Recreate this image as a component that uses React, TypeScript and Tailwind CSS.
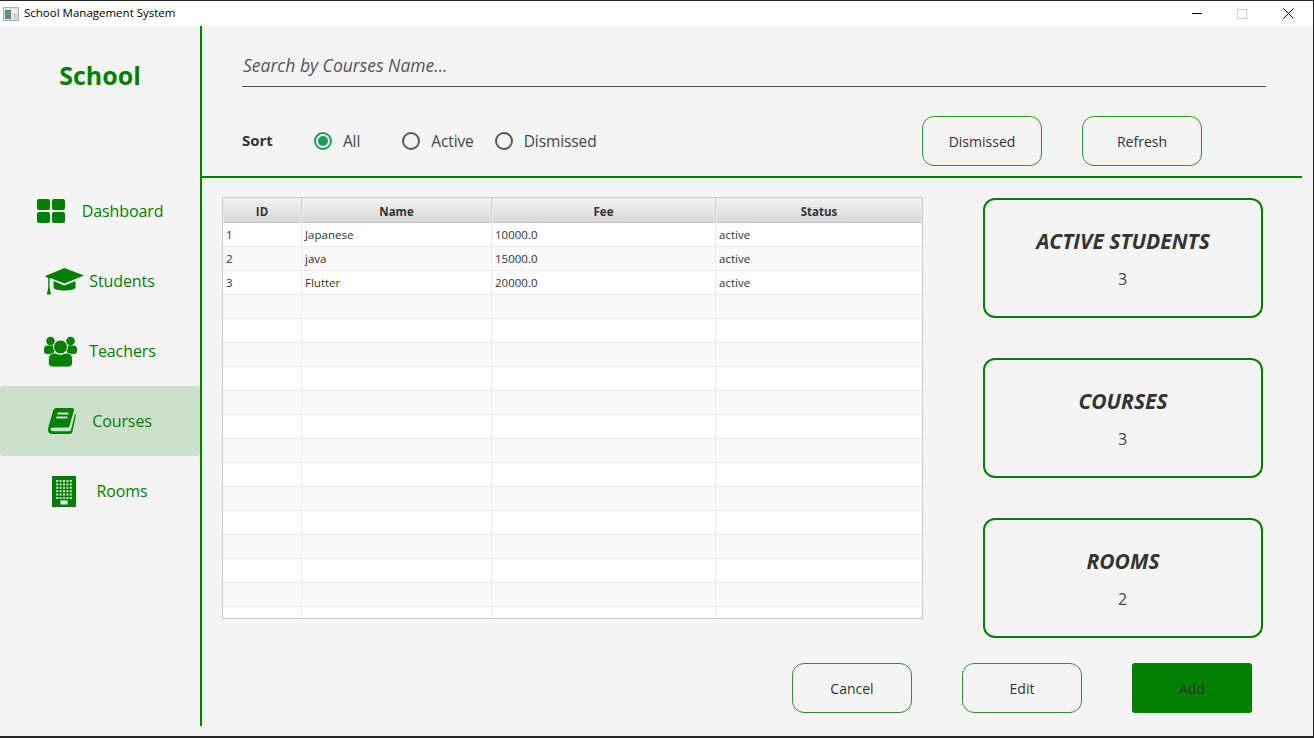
const GREEN = "#008000";

function DashboardIcon() {
  return (
    <svg width="28" height="24" viewBox="0 0 28 24" fill={GREEN}>
      <rect x="0" y="0" width="13" height="11" rx="2" />
      <rect x="15" y="0" width="13" height="11" rx="2" />
      <rect x="0" y="13" width="13" height="11" rx="2" />
      <rect x="15" y="13" width="13" height="11" rx="2" />
    </svg>
  );
}

function CapIcon() {
  return (
    <svg width="39" height="27" viewBox="0 0 39 27" fill={GREEN}>
      <path d="M19.5 0 L39 7.5 L19.5 15.5 L6 10.2 L4.6 10.8 V20 L6 26.5 H1.8 L3.2 20 V10.2 L0 8 Z" />
      <path d="M8.5 13 L19.5 17.6 L30.5 13 V19.5 C30.5 23.5 8.5 23.5 8.5 19.5 Z" />
    </svg>
  );
}

function TeachersIcon() {
  return (
    <svg width="33" height="31" viewBox="0 0 33 31" fill={GREEN}>
      <circle cx="6.5" cy="5" r="4.3" />
      <circle cx="26.5" cy="5" r="4.3" />
      <path d="M0 13 Q0 9.5 3.5 9.5 H10 V18 H3 Q0 18 0 15 Z" />
      <path d="M33 13 Q33 9.5 29.5 9.5 H23 V18 H30 Q33 18 33 15 Z" />
      <circle cx="16.5" cy="11" r="7" stroke="#f4f4f4" strokeWidth="1" />
      <path d="M4.5 27 V23 Q4.5 17 11 17 Q16.5 20 22 17 Q28.5 17 28.5 23 V27 Q28.5 31 24 31 H9 Q4.5 31 4.5 27 Z" stroke="#f4f4f4" strokeWidth="0.8" />
    </svg>
  );
}

function BookIcon() {
  return (
    <svg width="28" height="26" viewBox="0 0 28 26" fill={GREEN}>
      <path d="M8 0 H24 Q26.5 0 25.8 2.5 L21.5 18 Q21 19.5 19.5 19.5 H6 Q2.5 19.5 2.5 21.5 Q2.5 23.2 5.5 23.2 H21 Q22.5 23.2 23 22 L27 6 L28 7 L24.5 23.5 Q24 26 21 26 H5 Q0 26 0 22 Q0 20 1 17 L5 3 Q6 0 8 0 Z" />
      <rect x="9.5" y="4.5" width="11" height="2" fill="#cfe2cf" />
      <rect x="8.4" y="8.5" width="11" height="2" fill="#cfe2cf" />
    </svg>
  );
}

function RoomsIcon() {
  const rows = [0, 1, 2, 3, 4, 5];
  const cols = [0, 1, 2, 3, 4];
  return (
    <svg width="24" height="31" viewBox="0 0 24 31">
      <rect width="24" height="31" fill={GREEN} />
      {rows.map((r) =>
        cols.map((c) => (
          <rect key={`${r}-${c}`} x={4.2 + c * 3.4} y={4 + r * 3.4} width="2" height="2" fill="#cfe6cf" />
        ))
      )}
      <rect x="8.5" y="24.5" width="7" height="4" fill="#f4f4f4" />
    </svg>
  );
}

const navItems = [
  { label: "Dashboard", icon: <DashboardIcon />, gap: "gap-[17px]" },
  { label: "Students", icon: <CapIcon />, gap: "gap-[5px]" },
  { label: "Teachers", icon: <TeachersIcon />, gap: "gap-[12px]" },
  { label: "Courses", icon: <BookIcon />, gap: "gap-[16px]", active: true },
  { label: "Rooms", icon: <RoomsIcon />, gap: "gap-[20px]" },
];

const courses = [
  { id: "1", name: "Japanese", fee: "10000.0", status: "active" },
  { id: "2", name: "java", fee: "15000.0", status: "active" },
  { id: "3", name: "Flutter", fee: "20000.0", status: "active" },
];

const stats = [
  { title: "ACTIVE STUDENTS", value: "3" },
  { title: "COURSES", value: "3" },
  { title: "ROOMS", value: "2" },
];

function Radio({ label, checked, className }: { label: string; checked?: boolean; className?: string }) {
  return (
    <div className={`flex items-center gap-[11px] ${className ?? ""}`}>
      <span
        className={`flex h-[18px] w-[18px] items-center justify-center rounded-full border-2 ${
          checked ? "border-[#1e9c5b]" : "border-[#595959]"
        }`}
      >
        {checked && <span className="h-[10px] w-[10px] rounded-full bg-[#1e9c5b]" />}
      </span>
      <span className="text-[15.5px] leading-[20px] text-[#444] tracking-[-0.1px]">{label}</span>
    </div>
  );
}

function OutlineButton({ label }: { label: string }) {
  return (
    <button className="flex h-[50px] w-[120px] items-center justify-center rounded-[12px] border border-[#2f8f2f] pt-px text-[14px] text-[#333]">
      {label}
    </button>
  );
}

function Row({ index }: { index: number }) {
  const course = courses[index];
  return (
    <div
      className={`grid h-[24px] shrink-0 grid-cols-[79px_190px_224px_206px] border-b border-[#ececec] text-[11.5px] text-[#333] ${
        index % 2 === 0 ? "bg-white" : "bg-[#f9f9f9]"
      }`}
    >
      <div className="border-r border-[#ececec] pl-[3px] leading-[23px]">{course?.id}</div>
      <div className="border-r border-[#ececec] pl-[3px] leading-[23px]">{course?.name}</div>
      <div className="border-r border-[#ececec] pl-[3px] leading-[23px]">{course?.fee}</div>
      <div className="pl-[3px] leading-[23px]">{course?.status}</div>
    </div>
  );
}

export default function App() {
  return (
    <div className="flex h-[738px] w-[1314px] flex-col overflow-hidden border-t border-r border-b-2 border-[#262626] bg-[#f4f4f4] font-['Open_Sans',sans-serif]">
      {/* Title bar */}
      <div className="flex h-[25px] shrink-0 items-center bg-white pl-[3px] text-[11.5px] text-black">
        <svg width="16" height="14" viewBox="0 0 16 14">
          <rect x="0.5" y="0.5" width="15" height="13" fill="#dfe3e3" stroke="#a9adad" />
          <rect x="2" y="3" width="6" height="9" fill="#5f8f8c" />
          <rect x="9" y="3" width="5" height="3" fill="#f5f7f7" />
          <rect x="11" y="6" width="3" height="6" fill="#c7d3d3" />
        </svg>
        <span className="ml-[5px] pb-[2px]">School Management System</span>
        <div className="ml-auto flex items-center">
          <span className="mr-[35px] h-px w-[10px] bg-black" />
          <span className="mr-[36px] h-[10px] w-[10px] border border-[#ccc]" />
          <svg className="mr-[19px]" width="11" height="11" viewBox="0 0 11 11" stroke="black" strokeWidth="1">
            <path d="M0.5 0.5 L10.5 10.5 M10.5 0.5 L0.5 10.5" />
          </svg>
        </div>
      </div>

      <div className="flex h-[700px] shrink-0">
        {/* Sidebar */}
        <aside className="w-[202px] shrink-0 border-r-2 border-[#008000]">
          <div className="flex h-[150px] items-center justify-center pb-[50px] text-[25px] font-bold text-[#008000]">
            School
          </div>
          <nav>
            {navItems.map((item) => (
              <div
                key={item.label}
                className={`flex h-[70px] items-center justify-center rounded-[3px] ${item.gap} ${
                  item.active ? "bg-[#cce0cc]" : ""
                }`}
              >
                {item.icon}
                <span className="text-[16px] tracking-[-0.1px] text-[#008000]">{item.label}</span>
              </div>
            ))}
          </nav>
        </aside>

        {/* Main */}
        <main className="w-[1100px] shrink-0">
          <div className="h-[152px] border-b-2 border-[#008000] pl-[40px] pt-[20px]">
            <input
              readOnly
              placeholder="Search by Courses Name..."
              className="block h-[41px] w-[1024px] border-b border-[#555] bg-transparent pb-[2px] pl-px text-[17.5px] italic outline-none placeholder:text-[#555]"
            />
            <div className="mt-[29px] flex h-[50px] w-[960px] items-center">
              <span className="mr-[41px] pb-[2px] text-[15px] font-bold text-[#333]">Sort</span>
              <Radio label="All" checked className="mr-[42px]" />
              <Radio label="Active" className="mr-[21px]" />
              <Radio label="Dismissed" />
              <div className="ml-auto flex gap-[40px]">
                <OutlineButton label="Dismissed" />
                <OutlineButton label="Refresh" />
              </div>
            </div>
          </div>

          <div className="flex pl-[20px] pt-[19px]">
            <div className="flex h-[422px] w-[701px] flex-col overflow-hidden border border-[#c8c8c8] bg-white">
              <div className="grid h-[25px] shrink-0 grid-cols-[79px_190px_224px_206px] border-b border-[#c8c8c8] bg-gradient-to-b from-[#f2f2f2] to-[#d8d8d8] text-center text-[11.5px] font-bold leading-[28px] text-[#333]">
                <div className="border-r border-[#c8c8c8] shadow-[inset_0_0_0_1px_#efefef]">ID</div>
                <div className="border-r border-[#c8c8c8] shadow-[inset_0_0_0_1px_#efefef]">Name</div>
                <div className="border-r border-[#c8c8c8] shadow-[inset_0_0_0_1px_#efefef]">Fee</div>
                <div className="shadow-[inset_0_0_0_1px_#efefef]">Status</div>
              </div>
              {Array.from({ length: 17 }).map((_, i) => (
                <Row key={i} index={i} />
              ))}
            </div>

            <div className="ml-[60px] flex flex-col gap-[40px] pt-px">
              {stats.map((s) => (
                <div
                  key={s.title}
                  className="flex h-[120px] w-[280px] flex-col items-center rounded-[12px] border-2 border-[#008000] pt-[26px]"
                >
                  <div className="text-[21px] font-bold italic leading-[30px] text-[#333]">{s.title}</div>
                  <div className="mt-[11px] pr-px text-[16px] leading-[24px] text-[#444]">{s.value}</div>
                </div>
              ))}
            </div>
          </div>

          <div className="mt-[25px] flex w-[1050px] justify-end gap-[50px]">
            <OutlineButton label="Cancel" />
            <OutlineButton label="Edit" />
            <button className="flex h-[50px] w-[120px] items-center justify-center rounded-[3px] bg-[#008000] pt-px text-[14px] text-[#333]">
              Add
            </button>
          </div>
        </main>
      </div>
    </div>
  );
}
